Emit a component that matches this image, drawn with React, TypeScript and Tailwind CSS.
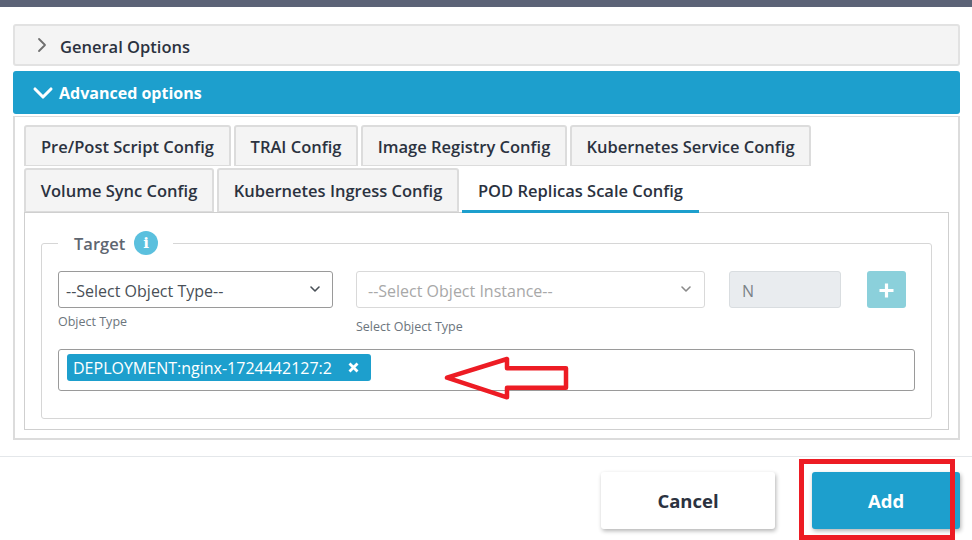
import { ChevronDown, ChevronRight } from 'lucide-react';

function Tab({ label, width, active }: { label: string; width: string; active?: boolean }) {
  if (active) {
    return <div className={`${width} relative h-[45px] pt-[4px] flex items-center justify-center text-[16.5px] font-semibold text-[#2b3240] border-b-[3px] border-[#1d9fcd] bg-white`}>{label}</div>;
  }
  return <div className={`${width} pt-[2px] flex items-center justify-center text-[16.5px] font-semibold text-[#2b3240] bg-[#f4f4f4] border-2 border-b border-[#dcdcdc] rounded-t-[3px]`}>{label}</div>;
}

export default function App() {
  return (
    <div className="relative w-[972px] h-[540px] overflow-hidden bg-white font-['Open_Sans',sans-serif]">
      <div className="h-[7px] bg-[#5c6377]" />

      <div className="mx-[13px] w-[947px] mt-[17px]">
        <div className="h-[42px] flex items-center bg-[#f4f4f4] border-2 border-[#e2e2e2] rounded-[3px] text-[16.5px] font-semibold text-[#2b3240]">
          <ChevronRight className="ml-[15px] mr-[6px] text-[#6f6f6f]" size={24} strokeWidth={1.8} />
          <span className="pt-[5px]">General Options</span>
        </div>
        <div className="mt-[5px] h-[43px] flex items-center bg-[#1d9fcd] rounded-[3px] text-[16px] font-bold text-white">
          <ChevronDown className="ml-[14px]" size={32} strokeWidth={2.3} />
          Advanced options
        </div>

        <div className="mt-[2px] h-[324px] border-2 border-[#dcdcdc] border-t px-[9px] pt-[8px]">
          <div className="flex gap-[3px] h-[41px]">
            <Tab label="Pre/Post Script Config" width="w-[207px]" />
            <Tab label="TRAI Config" width="w-[124px]" />
            <Tab label="Image Registry Config" width="w-[206px]" />
            <Tab label="Kubernetes Service Config" width="w-[241px]" />
          </div>
          <div className="flex gap-[3px] h-[44px] mt-[2px]">
            <Tab label="Volume Sync Config" width="w-[190px]" />
            <Tab label="Kubernetes Ingress Config" width="w-[242px]" />
            <Tab label="POD Replicas Scale Config" width="w-[237px]" active />
          </div>

          <div className="h-[218px] border border-[#cfcfcf] px-[16px] pt-[18px]">
            <fieldset className="h-[188px] border border-[#d6d6d6] rounded-[3px] px-[16px]">
              <legend className="w-[115px] h-[24px] pl-[16px] flex items-center gap-[9px] text-[16.5px] font-semibold text-[#5e6670]">
                <span className="pt-[3px]">Target</span>
                <span className="w-[24px] h-[24px] rounded-full bg-[#5bc0de] flex items-center justify-center text-white text-[15px] font-bold font-['DejaVu_Serif',serif]">i</span>
              </legend>

              <div className="flex items-start mt-[16px]">
                <div className="w-[275px]">
                  <div className="h-[37px] pt-[3px] flex items-center justify-between pl-[7px] pr-[9px] border border-[#9a9a9a] rounded-[3px] text-[16px] text-[#495057]">
                    --Select Object Type--
                    <ChevronDown size={16} strokeWidth={2.4} className="-mt-[4px]" />
                  </div>
                  <div className="mt-[6px] text-[12.5px] leading-[16px] text-[#6c757d]">Object Type</div>
                </div>
                <div className="w-[349px] ml-[23px]">
                  <div className="h-[37px] pt-[3px] flex items-center justify-between pl-[11px] pr-[10px] border border-[#d9d9d9] rounded-[3px] text-[16px] text-[#a8a8a8]">
                    --Select Object Instance--
                    <ChevronDown size={16} strokeWidth={2.4} className="-mt-[4px] text-[#8a8a8a]" />
                  </div>
                  <div className="mt-[11px] text-[12.5px] leading-[16px] text-[#6c757d]">Select Object Type</div>
                </div>
                <div className="w-[112px] h-[37px] pt-[3px] ml-[24px] flex items-center pl-[12px] bg-[#e9ecef] border border-[#d9dde0] rounded-[3px] text-[16px] text-[#7b8288]">N</div>
                <div className="w-[39px] h-[37px] pt-px ml-[26px] bg-[#8bd0db] rounded-[3px] flex items-center justify-center">
                  <svg width="15" height="15" viewBox="0 0 15 15"><path d="M7.5 0.5v14M0.5 7.5h14" stroke="#fff" strokeWidth="3.2" /></svg>
                </div>
              </div>

              <div className="mt-[14px] h-[42px] border border-[#9a9a9a] rounded-[3px] pl-[8px] pt-[4px]">
                <div className="w-[304px] h-[27px] bg-[#1d9fcd] rounded-[3px] flex items-center pl-[6px] text-[16px] text-white">
                  DEPLOYMENT:nginx-1724442127:2
                  <svg className="ml-[16px]" width="11" height="11" viewBox="0 0 11 11"><path d="M1.5 1.5l8 8M9.5 1.5l-8 8" stroke="#fff" strokeWidth="2.8" /></svg>
                </div>
              </div>
            </fieldset>
          </div>
        </div>
      </div>

      <div className="mt-[16px] h-px bg-[#e4e7ea]" />

      <div className="flex justify-end pr-[12px] pt-[15px] gap-[37px]">
        <div className="w-[174px] h-[57px] bg-white rounded-[3px] shadow-[1px_2px_4px_rgba(0,0,0,0.3)] flex items-center justify-center text-[18.5px] font-bold text-[#2b3240]">Cancel</div>
        <div className="w-[148px] h-[57px] bg-[#1d9fcd] rounded-[3px] shadow-[1px_2px_4px_rgba(0,0,0,0.3)] flex items-center justify-center text-[18.5px] font-bold text-white">Add</div>
      </div>

      {/* red annotations */}
      <div className="absolute left-[799px] top-[459px] w-[156px] h-[81px] border-[5px] border-[#ed1c24]" />
      <svg className="absolute left-[440px] top-[350px]" width="135" height="55" viewBox="0 0 135 55" fill="none">
        <path d="M7 27.7L67 9V18.3H126V37.7H67V47.3Z" stroke="#ed1c24" strokeWidth="4.5" strokeLinejoin="round" />
      </svg>
    </div>
  );
}
